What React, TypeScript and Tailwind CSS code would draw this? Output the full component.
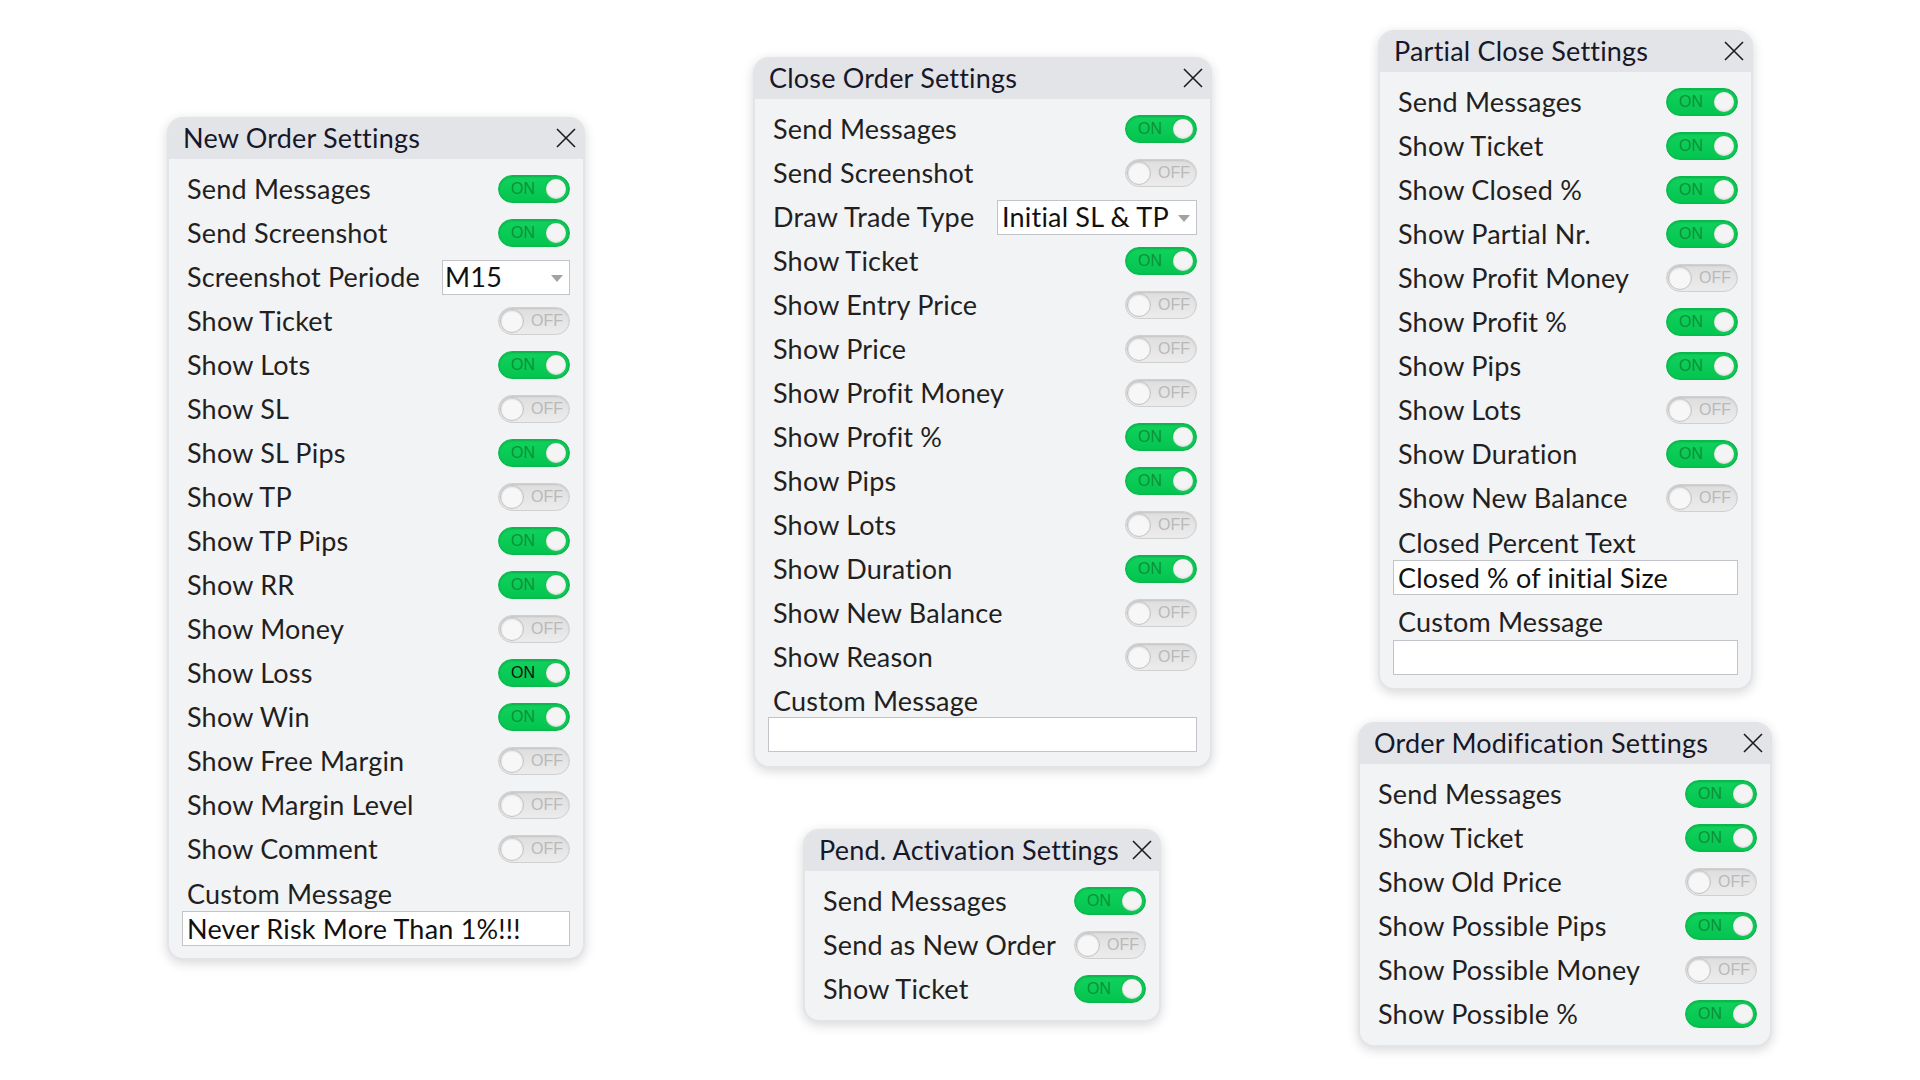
import React from "react";

type Item =
  | { kind: "toggle"; label: string; on: boolean; dark?: boolean }
  | { kind: "select"; label: string; value: string; width: string }
  | { kind: "label"; label: string; h: string }
  | { kind: "input"; value: string; mb?: string };

function Toggle({ on, dark }: { on: boolean; dark?: boolean }) {
  if (on) {
    return (
      <div className="relative h-[28px] w-[72px] shrink-0 rounded-full border border-[#0bb84c] bg-gradient-to-b from-[#10d25c] to-[#03c44f] shadow-[inset_0_1px_2px_rgba(0,0,0,0.18)]">
        <span
          className={
            dark
              ? "absolute left-[12px] top-[4px] font-['Liberation_Sans',sans-serif] text-[16px] leading-[18px] text-[#101010]"
              : "absolute left-[12px] top-[4px] font-['Liberation_Sans',sans-serif] text-[16px] leading-[18px] text-[#0d9038]"
          }
        >
          ON
        </span>
        <span className="absolute right-[1px] top-[1px] h-[24px] w-[24px] rounded-full border-2 border-[#12c656] bg-[#f4f4f4] shadow-[inset_0_-1px_2px_rgba(0,0,0,0.12)]" />
      </div>
    );
  }
  return (
    <div className="relative h-[28px] w-[72px] shrink-0 rounded-full border border-[#d0d0d0] bg-gradient-to-b from-[#dedede] to-[#ececec] shadow-[inset_0_1px_2px_rgba(0,0,0,0.12)]">
      <span className="absolute left-[32px] top-[4px] font-['Liberation_Sans',sans-serif] text-[16px] leading-[18px] text-[#b9b9b9]">
        OFF
      </span>
      <span className="absolute left-[1px] top-[1px] h-[24px] w-[24px] rounded-full border border-[#c2c2c2] bg-[#f7f7f7] shadow-[inset_0_1px_2px_rgba(0,0,0,0.15)]" />
    </div>
  );
}

function CloseIcon() {
  return (
    <svg width="20" height="20" viewBox="0 0 20 20" className="shrink-0">
      <path d="M1 1 L19 19 M19 1 L1 19" stroke="#1c1c1c" strokeWidth="1.6" fill="none" />
    </svg>
  );
}

const txt = "text-[27px] leading-[30px] tracking-[0.2px] text-[#231f1e]";

function Row({ item }: { item: Item }) {
  if (item.kind === "toggle") {
    return (
      <div className="flex h-[44px] items-center justify-between pl-[18px] pr-[13px]">
        <span className="text-[27px] leading-[30px] tracking-[0.2px] text-[#231f1e]">{item.label}</span>
        <Toggle on={item.on} dark={item.dark} />
      </div>
    );
  }
  if (item.kind === "select") {
    return (
      <div className="flex h-[44px] items-center justify-between pl-[18px] pr-[13px]">
        <span className="text-[27px] leading-[30px] tracking-[0.2px] text-[#231f1e]">{item.label}</span>
        <div
          className={
            item.width === "wide"
              ? "relative flex h-[35px] w-[200px] items-center overflow-hidden border border-[#c2c4ca] bg-white pl-[4px] text-[27px] leading-[30px] tracking-[0.2px] text-[#111]"
              : "relative flex h-[35px] w-[128px] items-center overflow-hidden border border-[#c2c4ca] bg-white pl-[2px] text-[27px] leading-[30px] tracking-[0.2px] text-[#111]"
          }
        >
          <span className="whitespace-nowrap">{item.value}</span>
          <svg width="12" height="7" viewBox="0 0 12 7" className="absolute right-[6px] top-[14px]">
            <path d="M0 0 L12 0 L6 7 Z" fill="#a2a2a2" />
          </svg>
        </div>
      </div>
    );
  }
  if (item.kind === "label") {
    return (
      <div
        className={
          item.h === "38"
            ? "flex h-[38px] items-center pl-[18px] pt-[6px] text-[27px] leading-[30px] tracking-[0.2px] text-[#231f1e]"
            : item.h === "45"
            ? "flex h-[45px] items-center pl-[18px] pt-[9px] text-[27px] leading-[30px] tracking-[0.2px] text-[#231f1e]"
            : "flex h-[40px] items-center pl-[18px] pt-[5px] text-[27px] leading-[30px] tracking-[0.2px] text-[#231f1e]"
        }
      >
        {item.label}
      </div>
    );
  }
  return (
    <div className="px-[13px]">
      <div className="flex h-[35px] items-center border border-[#c2c4ca] bg-white pl-[4px] text-[27px] leading-[30px] tracking-[0.2px] text-[#111]">
        {item.value}
      </div>
    </div>
  );
}

function Panel({
  title,
  pos,
  items,
  clipTitle,
}: {
  title: string;
  pos: string;
  items: Item[];
  clipTitle?: boolean;
}) {
  return (
    <div
      className={
        "absolute overflow-hidden rounded-[16px] border-2 border-[#e3e4e8] bg-[#f2f3f5] shadow-[0_3px_12px_rgba(0,0,0,0.16)] " +
        pos
      }
    >
      <div className="flex h-[40px] items-center justify-between bg-[#e3e4e8] pb-[2px] pl-[14px] pr-[7px]">
        <span
          className={
            clipTitle
              ? "w-[302px] overflow-hidden whitespace-nowrap text-[27px] leading-[30px] tracking-[0.2px] text-[#17172a]"
              : "whitespace-nowrap text-[27px] leading-[30px] tracking-[0.2px] text-[#17172a]"
          }
        >
          {title}
        </span>
        <CloseIcon />
      </div>
      <div className="pt-[8px]">
        {items.map((it, i) => (
          <Row key={i} item={it} />
        ))}
      </div>
    </div>
  );
}

const t = (label: string, on: boolean, dark?: boolean): Item => ({ kind: "toggle", label, on, dark });

const newOrder: Item[] = [
  t("Send Messages", true),
  t("Send Screenshot", true),
  { kind: "select", label: "Screenshot Periode", value: "M15", width: "narrow" },
  t("Show Ticket", false),
  t("Show Lots", true),
  t("Show SL", false),
  t("Show SL Pips", true),
  t("Show TP", false),
  t("Show TP Pips", true),
  t("Show RR", true),
  t("Show Money", false),
  t("Show Loss", true, true),
  t("Show Win", true),
  t("Show Free Margin", false),
  t("Show Margin Level", false),
  t("Show Comment", false),
  { kind: "label", label: "Custom Message", h: "40" },
  { kind: "input", value: "Never Risk More Than 1%!!!" },
];

const closeOrder: Item[] = [
  t("Send Messages", true),
  t("Send Screenshot", false),
  { kind: "select", label: "Draw Trade Type", value: "Initial SL & TP", width: "wide" },
  t("Show Ticket", true),
  t("Show Entry Price", false),
  t("Show Price", false),
  t("Show Profit Money", false),
  t("Show Profit %", true),
  t("Show Pips", true),
  t("Show Lots", false),
  t("Show Duration", true),
  t("Show New Balance", false),
  t("Show Reason", false),
  { kind: "label", label: "Custom Message", h: "38" },
  { kind: "input", value: "" },
];

const pend: Item[] = [t("Send Messages", true), t("Send as New Order", false), t("Show Ticket", true)];

const partial: Item[] = [
  t("Send Messages", true),
  t("Show Ticket", true),
  t("Show Closed %", true),
  t("Show Partial Nr.", true),
  t("Show Profit Money", false),
  t("Show Profit %", true),
  t("Show Pips", true),
  t("Show Lots", false),
  t("Show Duration", true),
  t("Show New Balance", false),
  { kind: "label", label: "Closed Percent Text", h: "40" },
  { kind: "input", value: "Closed % of initial Size" },
  { kind: "label", label: "Custom Message", h: "45" },
  { kind: "input", value: "" },
];

const modif: Item[] = [
  t("Send Messages", true),
  t("Show Ticket", true),
  t("Show Old Price", false),
  t("Show Possible Pips", true),
  t("Show Possible Money", false),
  t("Show Possible %", true),
];

export default function App() {
  void txt;
  return (
    <div className="relative h-[1080px] w-[1920px] overflow-hidden bg-white font-['Lato',sans-serif]">
      <Panel title="New Order Settings" pos="left-[167px] top-[117px] w-[418px] h-[843px]" items={newOrder} />
      <Panel title="Close Order Settings" pos="left-[753px] top-[57px] w-[459px] h-[711px]" items={closeOrder} />
      <Panel title="Pend. Activation Settings" pos="left-[803px] top-[829px] w-[358px] h-[193px]" items={pend} clipTitle />
      <Panel title="Partial Close Settings" pos="left-[1378px] top-[30px] w-[375px] h-[660px]" items={partial} />
      <Panel title="Order Modification Settings" pos="left-[1358px] top-[722px] w-[414px] h-[325px]" items={modif} />
    </div>
  );
}
